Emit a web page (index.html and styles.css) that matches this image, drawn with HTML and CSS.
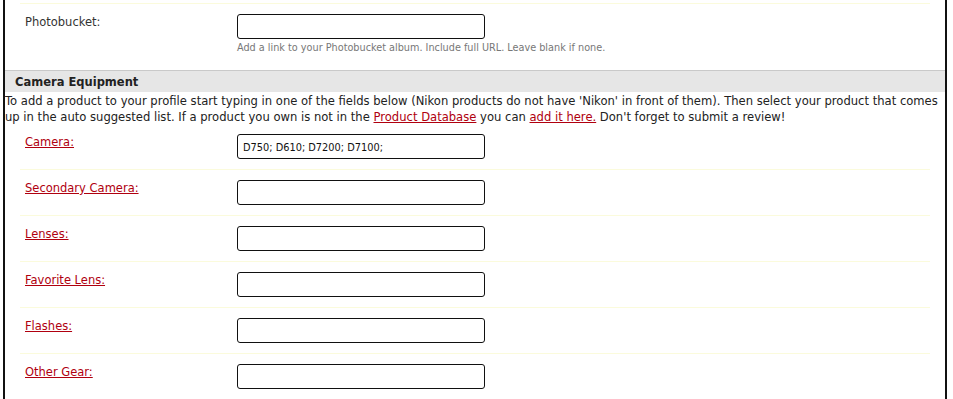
FILE: index.html
```html
<!DOCTYPE html>
<html>
<head>
<meta charset="utf-8">
<link rel="stylesheet" href="styles.css">
</head>
<body>
<div class="panel">
  <div class="row row-first">
    <div class="label plain">Photobucket:</div>
    <div class="field">
      <div class="box"></div>
      <div class="help">Add a link to your Photobucket album. Include full URL. Leave blank if none.</div>
    </div>
  </div>
  <div class="section-head">Camera Equipment</div>
  <p class="intro">To add a product to your profile start typing in one of the fields below (Nikon products do not have 'Nikon' in front of them). Then select your product that comes up in the auto suggested list. If a product you own is not in the <a href="#">Product Database</a> you can <a href="#">add it here.</a> Don't forget to submit a review!</p>
  <div class="row row-cam">
    <div class="label"><a href="#">Camera:</a></div>
    <div class="field"><div class="box">D750; D610; D7200; D7100;</div></div>
  </div>
  <div class="row">
    <div class="label"><a href="#">Secondary Camera:</a></div>
    <div class="field"><div class="box"></div></div>
  </div>
  <div class="row">
    <div class="label"><a href="#">Lenses:</a></div>
    <div class="field"><div class="box"></div></div>
  </div>
  <div class="row">
    <div class="label"><a href="#">Favorite Lens:</a></div>
    <div class="field"><div class="box"></div></div>
  </div>
  <div class="row">
    <div class="label"><a href="#">Flashes:</a></div>
    <div class="field"><div class="box"></div></div>
  </div>
  <div class="row">
    <div class="label"><a href="#">Other Gear:</a></div>
    <div class="field"><div class="box"></div></div>
  </div>
</div>
</body>
</html>
```
FILE: styles.css
```css
html, body {
  margin: 0;
  padding: 0;
  background: #fff;
  overflow: hidden;
}
body {
  font-family: "DejaVu Sans", Verdana, sans-serif;
  font-size: 11.5px;
  color: #222;
}
.panel {
  margin-left: 3px;
  width: 940px;
  border-left: 2px solid #111;
  border-right: 2px solid #111;
  padding-top: 3px;
  min-height: 420px;
}
.row {
  margin: 0 15px;
  padding: 10px 0 10px 5px;
  border-top: 1px solid #fbfbdc;
  display: grid;
  grid-template-columns: 212px 248px;
}
.row-first {
  padding-bottom: 15px;
}
.row-cam {
  border-top: none;
  padding-top: 9px;
}
.label {
  line-height: 16px;
}
.label.plain {
  color: #333;
}
.label a, .intro a {
  color: #b0000f;
  text-decoration: underline;
}
.box {
  box-sizing: border-box;
  height: 25px;
  border: 1px solid #111;
  border-radius: 3px;
  padding: 6px 5px 0;
  font-size: 9.8px;
  line-height: 14px;
  color: #111;
}
.help {
  font-size: 9.7px;
  color: #777;
  line-height: 15px;
  padding-top: 1px;
  white-space: nowrap;
}
.section-head {
  border-top: 1px solid #c9c9c9;
  background: #e6e6e6;
  height: 21px;
  line-height: 22px;
  padding-left: 10px;
  font-weight: bold;
  font-size: 11.5px;
  color: #222;
}
.intro {
  margin: 0;
  padding-top: 1px;
  font-size: 11.58px;
  line-height: 16px;
  color: #222;
}
```
